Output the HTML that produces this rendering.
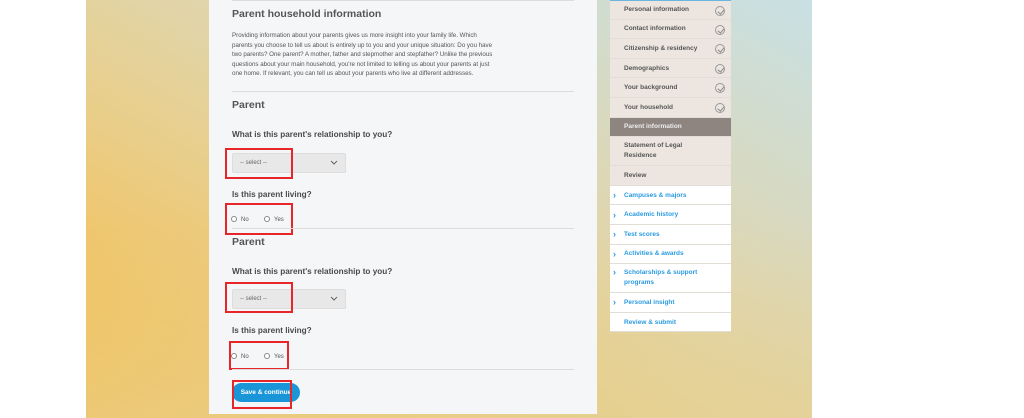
<!DOCTYPE html>
<html><head><style>
*{margin:0;padding:0;box-sizing:border-box}
body{width:1024px;height:418px;background:#fff;position:relative;overflow:hidden;font-family:"Liberation Sans",sans-serif}
.bg{position:absolute;left:86px;top:0;width:726px;height:418px;
background:linear-gradient(to top right,#f8bb45 0%,#e8cf8e 40%,#dfd6b0 60%,#c8e0e4 100%)}
.bg2{position:absolute;left:86px;top:0;width:726px;height:418px;background:linear-gradient(to bottom, rgba(0,0,0,0) 55%, rgba(228,210,150,.6) 100%);}
.form{position:absolute;left:209px;top:0;width:388px;height:414px;background:#f5f6f7}
.t{position:absolute;left:232px;color:#4a4a4a;white-space:nowrap}
.h2{font-size:10.5px;font-weight:bold;color:#555}
.q{font-size:8.2px;font-weight:bold;color:#4a4a4a}
.p{font-size:6.2px;line-height:9.5px;color:#555;white-space:normal;width:262px}
.hr{position:absolute;left:232px;width:342px;height:1px;background:#dcdcdc}
.sel{position:absolute;left:232px;width:114px;height:20px;background:#e8e8e8;border:1px solid #ddd;border-radius:2px;font-size:6px;color:#666;padding:6px 0 0 7px}
.sel svg{position:absolute;right:7px;top:6px}
.red{position:absolute;border:2px solid #e8262a}
.rad{position:absolute;font-size:6px;color:#555}
.rad i{display:inline-block;width:6px;height:6px;border:0.8px solid #888;border-radius:50%;vertical-align:-1px;margin-right:4px;background:#fff}
.btn{position:absolute;left:232px;top:383px;width:68px;height:19px;background:#1a95d8;border-radius:10px;color:#fff;font-size:6.5px;font-weight:bold;text-align:center;line-height:19px}
.side{position:absolute;left:610px;top:0;width:121px}
.side div{position:relative;height:19.6px;border-bottom:1px solid #e2ddd7;font-size:6.5px;font-weight:bold;padding-left:14px;display:flex;align-items:center}
.g{background:#ede6e0;color:#555}
.w{background:#fff;color:#2a9be0}
.cur{background:#8e8480!important;color:#eee!important}
.ck{position:absolute;right:6px;top:5px;width:10px;height:10px;border:0.8px solid #999;border-radius:50%}
.ck:after{content:"";position:absolute;left:3px;top:1px;width:2.5px;height:5px;border-right:0.8px solid #888;border-bottom:0.8px solid #888;transform:rotate(40deg)}
.ar{position:absolute;left:3px;font-size:9px;color:#2a9be0;font-weight:bold}
</style></head><body>
<div class="bg"></div><div class="bg2"></div>
<div class="form"></div>
<div class="hr" style="top:0"></div>
<div class="t h2" style="top:8px">Parent household information</div>
<div class="t p" style="top:31px">Providing information about your parents gives us more insight into your family life. Which parents you choose to tell us about is entirely up to you and your unique situation: Do you have two parents? One parent? A mother, father and stepmother and stepfather? Unlike the previous questions about your main household, you're not limited to telling us about your parents at just one home. If relevant, you can tell us about your parents who live at different addresses.</div>
<div class="hr" style="top:91px"></div>
<div class="t h2" style="top:99px">Parent</div>
<div class="t q" style="top:130px">What is this parent's relationship to you?</div>
<div class="sel" style="top:153px">-- select --<svg width="8" height="6"><path d="M1 1L4 4L7 1" stroke="#666" fill="none"/></svg></div>
<div class="red" style="left:225px;top:148px;width:68px;height:31px"></div>
<div class="t q" style="top:190px">Is this parent living?</div>
<div class="rad" style="left:231px;top:216px"><i></i>No</div>
<div class="rad" style="left:264px;top:216px"><i></i>Yes</div>
<div class="red" style="left:225px;top:203px;width:68px;height:32px"></div>
<div class="hr" style="top:228px"></div>
<div class="t h2" style="top:236px">Parent</div>
<div class="t q" style="top:267px">What is this parent's relationship to you?</div>
<div class="sel" style="top:289px">-- select --<svg width="8" height="6"><path d="M1 1L4 4L7 1" stroke="#666" fill="none"/></svg></div>
<div class="red" style="left:225px;top:282px;width:68px;height:31px"></div>
<div class="t q" style="top:326px">Is this parent living?</div>
<div class="rad" style="left:231px;top:353px"><i></i>No</div>
<div class="rad" style="left:264px;top:353px"><i></i>Yes</div>
<div class="red" style="left:229px;top:341px;width:60px;height:29px"></div>
<div class="hr" style="top:369px"></div>
<div class="btn">Save &amp; continue</div>
<div class="red" style="left:232px;top:380px;width:60px;height:29px"></div>
<div class="side">
<div class="g" style="border-top:1.5px solid #6bb6e0">Personal information<span class="ck"></span></div>
<div class="g">Contact information<span class="ck"></span></div>
<div class="g">Citizenship &amp; residency<span class="ck"></span></div>
<div class="g">Demographics<span class="ck"></span></div>
<div class="g">Your background<span class="ck"></span></div>
<div class="g">Your household<span class="ck"></span></div>
<div class="g cur">Parent information</div>
<div class="g" style="height:29px;line-height:10px">Statement of Legal<br>Residence</div>
<div class="g">Review</div>
<div class="w"><span class="ar">›</span>Campuses &amp; majors</div>
<div class="w"><span class="ar">›</span>Academic history</div>
<div class="w"><span class="ar">›</span>Test scores</div>
<div class="w"><span class="ar">›</span>Activities &amp; awards</div>
<div class="w" style="height:29px;line-height:10px"><span class="ar" style="top:3px">›</span>Scholarships &amp; support<br>programs</div>
<div class="w"><span class="ar">›</span>Personal insight</div>
<div class="w">Review &amp; submit</div>
</div>
</body></html>
